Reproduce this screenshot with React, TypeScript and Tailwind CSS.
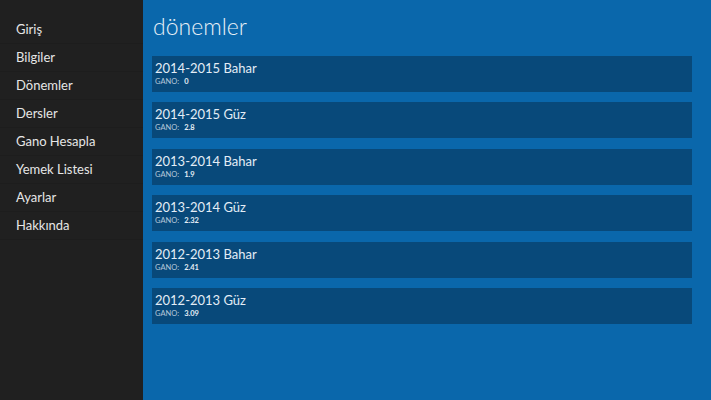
const menu = ["Giriş", "Bilgiler", "Dönemler", "Dersler", "Gano Hesapla", "Yemek Listesi", "Ayarlar", "Hakkında"];

const terms = [
  { name: "2014-2015 Bahar", gano: "0" },
  { name: "2014-2015 Güz", gano: "2.8" },
  { name: "2013-2014 Bahar", gano: "1.9" },
  { name: "2013-2014 Güz", gano: "2.32" },
  { name: "2012-2013 Bahar", gano: "2.41" },
  { name: "2012-2013 Güz", gano: "3.09" },
];

export default function App() {
  return (
    <div className="flex h-[400px] w-[711px] overflow-hidden font-['Lato',sans-serif] text-[#e3edf6]">
      <aside className="w-[143px] shrink-0 bg-[#202020] pt-[16px]">
        {menu.map((m) => (
          <div key={m} className="flex h-[28px] items-center border-b border-[#1d1d1d] pl-[16px] text-[13px] text-[#e6e6e6]">
            {m}
          </div>
        ))}
      </aside>
      <main className="flex-1 bg-[#0a67ab] pl-[9px] pr-[19px]">
        <h1 className="mt-[10px] h-[34px] pl-[1px] text-[23px] font-light leading-[32px] text-[#e8f0f7]">dönemler</h1>
        <div className="mt-[12px] flex flex-col gap-[10.4px]">
          {terms.map((t) => (
            <div key={t.name} className="h-[36px] bg-[#08497a] pl-[3px] pt-[4px]">
              <div className="text-[13px] leading-[17px]">{t.name}</div>
              <div className="flex items-center gap-[5px] text-[7.5px] leading-[9px]">
                <span className="text-[#b6c8da]">GANO:</span>
                <span className="font-bold">{t.gano}</span>
              </div>
            </div>
          ))}
        </div>
      </main>
    </div>
  );
}
